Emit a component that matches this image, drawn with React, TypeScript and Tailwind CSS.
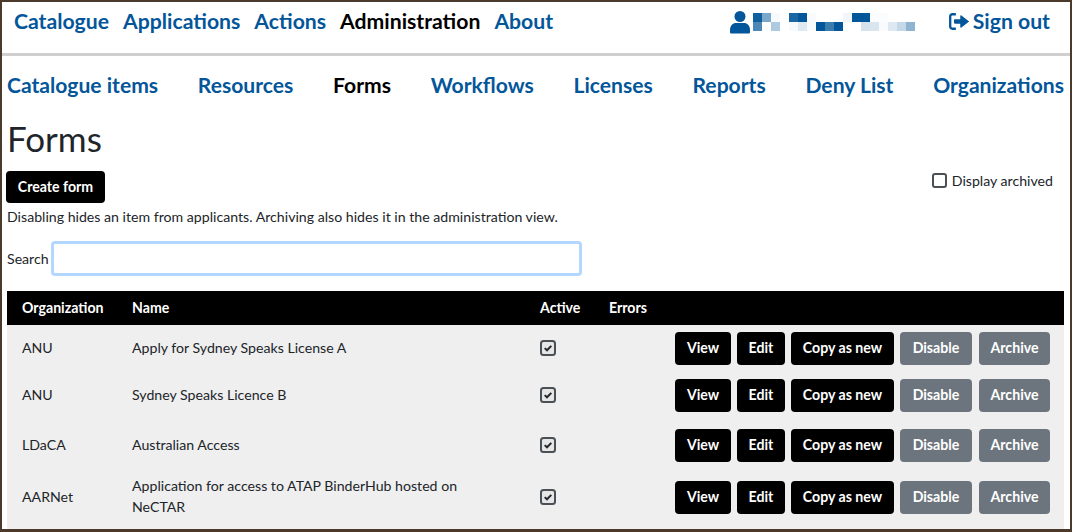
const topLinks = [
  { label: "Catalogue" },
  { label: "Applications" },
  { label: "Actions" },
  { label: "Administration", active: true },
  { label: "About" },
];

const subLinks = [
  { label: "Catalogue items" },
  { label: "Resources" },
  { label: "Forms", active: true },
  { label: "Workflows" },
  { label: "Licenses" },
  { label: "Reports" },
  { label: "Deny List" },
  { label: "Organizations" },
];

const forms = [
  { org: "ANU", name: "Apply for Sydney Speaks License A", rowClass: "h-[46px]" },
  { org: "ANU", name: "Sydney Speaks Licence B", rowClass: "h-[48px]" },
  { org: "LDaCA", name: "Australian Access", rowClass: "h-[52px]" },
  {
    org: "AARNet",
    name: "Application for access to ATAP BinderHub hosted on NeCTAR",
    rowClass: "h-[59px]",
  },
];

// mosaic that hides the user name in the reference: x, y, colour
const mosaic: [number, number, string][] = [
  [3, 0, "#0f5f9f"],
  [12, 0, "#7aa8cc"],
  [21, 0, "#f7fafc"],
  [39, 0, "#1a66a3"],
  [48, 0, "#04569a"],
  [57, 0, "#f8fafc"],
  [93, 0, "#f2f6fa"],
  [102, 0, "#04569a"],
  [111, 0, "#04569a"],
  [120, 0, "#fafcfd"],
  [129, 0, "#fafcfd"],
  [3, 9, "#4b88b6"],
  [21, 9, "#aecae0"],
  [39, 9, "#f7fafc"],
  [48, 9, "#deeaf3"],
  [57, 9, "#f8fafc"],
  [66, 9, "#04569a"],
  [75, 9, "#3a7cae"],
  [84, 9, "#04569a"],
  [111, 9, "#d5e3ef"],
  [120, 9, "#d9e6f0"],
  [129, 9, "#f8fafc"],
  [138, 9, "#dde8f2"],
  [147, 9, "#c5d8e8"],
  [156, 9, "#8fb4d2"],
];

function UserIcon() {
  return (
    <svg width="20" height="24" viewBox="0 0 20 24" fill="#04569a" className="shrink-0">
      <circle cx="10" cy="6.500" r="5.500" />
      <path d="M0 20c0-4.600 3-7 6-7h8c3 0 6 2.400 6 7v2c0 1-.6 1.500-1.500 1.500h-17C.6 23.500 0 23 0 22z" />
    </svg>
  );
}

function SignOutIcon() {
  return (
    <svg width="22" height="19" viewBox="0 0 21 18" fill="#04569a" className="shrink-0">
      <path d="M7.500 1H4.200C2.400 1 1 2.400 1 4.200v9.600C1 15.600 2.400 17 4.200 17h3.300v-2.200H4.400c-.7 0-1.200-.5-1.200-1.200V4.400c0-.7.5-1.200 1.200-1.200h3.100z" />
      <path d="M12.800 3.200 20.200 9l-7.400 5.800c-.5.400-1.100 0-1.100-.6v-3H6.600c-.5 0-.9-.4-.9-.9V7.700c0-.5.4-.9.900-.9h5.100v-3c0-.6.600-1 1.100-.6z" />
    </svg>
  );
}

function CheckedBox() {
  return (
    <svg width="16" height="16" viewBox="0 0 16 16" className="block">
      <rect x="1" y="1" width="14" height="14" rx="2.500" fill="#e6e6e6" stroke="#4a5056" strokeWidth="2" />
      <path d="M4.700 8.100 7 10.300 11.300 5.900" fill="none" stroke="#24282c" strokeWidth="2" />
    </svg>
  );
}

function Btn({ children, muted, className }: { children: string; muted?: boolean; className: string }) {
  return (
    <button
      className={
        "h-[33px] rounded-[4px] text-[14.150px] font-bold text-white " +
        (muted ? "bg-[#6c757d] " : "bg-black ") +
        className
      }
    >
      {children}
    </button>
  );
}

export default function App() {
  return (
    <div className="h-[532px] w-[1072px] overflow-hidden border-2 border-b-[3px] border-[#4b3a2b] bg-white font-[Lato,sans-serif] text-[#212529]">
      <nav className="flex h-[51px] items-center justify-between pb-[11px] pl-3 pr-5 text-[21.200px] font-bold text-[#04569a]">
        <div className="flex gap-3.5">
          {topLinks.map((l) => (
            <span key={l.label} className={l.active ? "text-black" : ""}>
              {l.label}
            </span>
          ))}
        </div>
        <div className="flex items-center">
          <UserIcon />
          <svg width="165" height="18" className="shrink-0">
            {mosaic.map(([x, y, c]) => (
              <rect key={x + "-" + y} x={x} y={y} width="9" height="9" fill={c} />
            ))}
          </svg>
          <span className="ml-[33px] flex items-center gap-[3px]">
            <SignOutIcon />
            Sign out
          </span>
        </div>
      </nav>
      <div className="h-[3px] bg-[#cfcfcf]" />

      <div className="flex h-[58px] items-center justify-between pl-[5px] pr-[6px] text-[21.100px] font-bold text-[#04569a]">
        {subLinks.map((l) => (
          <span key={l.label} className={l.active ? "text-black" : ""}>
            {l.label}
          </span>
        ))}
      </div>

      <div className="pl-1 pr-1.5">
        <h1 className="h-[57px] pt-0.5 pl-px text-[35px] leading-[44px] font-normal">Forms</h1>
        <div className="flex justify-between">
          <button className="h-[32px] w-[99px] rounded-[4px] bg-black text-[14.150px] font-bold text-white">
            Create form
          </button>
          <label className="mr-[11px] flex h-[19px] items-center gap-[5px] text-[14.150px]">
            <span className="h-[15px] w-[15px] rounded-[3px] border-2 border-[#4a5056]" />
            Display archived
          </label>
        </div>
        <p className="mt-[3px] h-[21px] pl-px text-[14.150px] leading-[21px]">
          Disabling hides an item from applicants. Archiving also hides it in the administration view.
        </p>
        <div className="mt-[14px] flex items-center gap-[2px] pl-px text-[14.150px]">
          <span>Search</span>
          <div className="h-[35px] w-[531px] rounded-[4px] border-[3px] border-[#b3d7ff] bg-white" />
        </div>

        <table className="mt-[15px] ml-px w-[1057px] table-fixed border-collapse text-[14.150px]">
          <colgroup>
            <col className="w-[125px]" />
            <col className="w-[408px]" />
            <col className="w-[69px]" />
            <col className="w-[60px]" />
            <col />
          </colgroup>
          <thead>
            <tr className="h-[34px] bg-black text-left font-bold text-white">
              <th className="pl-[15px]">Organization</th>
              <th>Name</th>
              <th>Active</th>
              <th>Errors</th>
              <th />
            </tr>
          </thead>
          <tbody className="bg-[#efefef]">
            {forms.map((f) => {
              const last = f.org === "AARNet";
              const cellPad = last ? "pb-[7px]" : "";
              return (
                <tr key={f.name} className={f.rowClass}>
                  <td className={"pl-[15px] " + cellPad}>{f.org}</td>
                  <td className={"pr-[60px] leading-[21px] " + (last ? "pb-[9px]" : "pb-[2px]")}>{f.name}</td>
                  <td className={cellPad}>
                    <CheckedBox />
                  </td>
                  <td />
                  <td className={cellPad}>
                    <div className="flex justify-end gap-1.5 pr-3.5">
                      <Btn className="w-[56px]">View</Btn>
                      <Btn className="w-[48px]">Edit</Btn>
                      <Btn className="w-[103px]">Copy as new</Btn>
                      <Btn muted className="mr-px w-[72px]">Disable</Btn>
                      <Btn muted className="w-[71px]">Archive</Btn>
                    </div>
                  </td>
                </tr>
              );
            })}
          </tbody>
        </table>
      </div>
    </div>
  );
}
